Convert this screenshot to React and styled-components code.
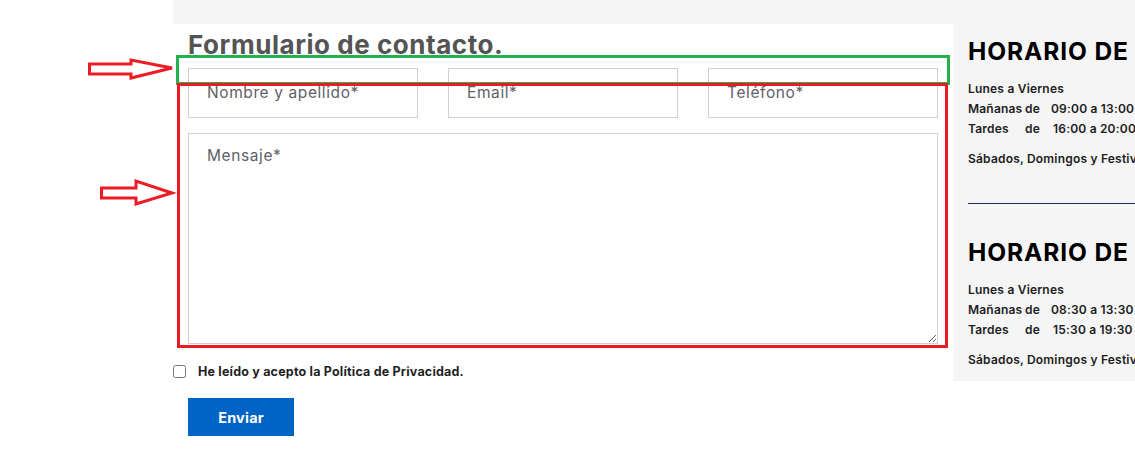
import React from "react";
import styled, { createGlobalStyle } from "styled-components";

const Global = createGlobalStyle`
  html, body { margin: 0; padding: 0; background: #fff; overflow: hidden; }
  body { font-family: "Inter", "Noto Sans", sans-serif; }
  * { box-sizing: border-box; }
`;

const Stage = styled.div`
  position: relative;
  width: 1135px;
  height: 453px;
  overflow: hidden;
  background: #fff;
`;

const Page = styled.div`
  padding-left: 173px;
  width: 1600px;
`;

const TopBand = styled.div`
  height: 24px;
  background: #f5f5f5;
`;

const Row = styled.div`
  display: flex;
  align-items: flex-start;
`;

const FormCol = styled.div`
  width: 780px;
  padding: 0 15px;
  background: #fff;
`;

const Title = styled.h2`
  margin: 0;
  height: 44px;
  line-height: 42px;
  font-size: 26px;
  font-weight: 700;
  color: #545454;
  letter-spacing: 0.55px;
`;

const Fields = styled.div`
  display: grid;
  grid-template-columns: repeat(3, 1fr);
  gap: 30px;
`;

const fieldBase = `
  display: block;
  width: 100%;
  border: 1px solid #d0d0d0;
  background: #fff;
  font-family: "Inter", "Noto Sans", sans-serif;
  font-size: 15.5px;
  letter-spacing: 0.6px;
  color: #333;
  outline: none;
  border-radius: 0;
  &::placeholder { color: #5f6169; opacity: 1; }
`;

const Input = styled.input`
  ${fieldBase}
  height: 50px;
  padding: 0 18px 2px;
`;

const TextArea = styled.textarea`
  ${fieldBase}
  margin-top: 15px;
  height: 211px;
  padding: 12px 18px;
  resize: vertical;
`;

const CheckRow = styled.label`
  display: flex;
  align-items: center;
  gap: 12px;
  margin: 20px 0 0 -15px;
  font-size: 12.5px;
  font-weight: 700;
  letter-spacing: 0.2px;
  color: #1f1f24;
`;

const Check = styled.input`
  margin: 0;
  width: 13px;
  height: 13px;
`;

const Button = styled.button`
  display: block;
  margin-top: 19px;
  width: 106px;
  height: 38px;
  border: 0;
  background: #0063c6;
  color: #fff;
  font-family: "Inter", "Noto Sans", sans-serif;
  font-size: 14.5px;
  font-weight: 700;
  letter-spacing: 0.2px;
`;

const Sidebar = styled.aside`
  width: 400px;
  background: #f5f5f5;
  padding: 0 15px 11px;
`;

const Block = styled.div`
  padding-top: ${(p) => p.$top}px;
`;

const Heading = styled.h3`
  margin: 0 0 13px;
  line-height: 30px;
  font-size: 24.5px;
  font-weight: 700;
  color: #000;
  letter-spacing: 0.9px;
`;

const Line = styled.div`
  line-height: 20px;
  font-size: 12px;
  font-weight: 600;
  letter-spacing: 0.2px;
  color: #1c1c22;
  white-space: nowrap;
  margin-top: ${(p) => p.$gap || 0}px;
`;

const Cell = styled.span`
  display: inline-block;
  width: ${(p) => p.$w}px;
`;

const Divider = styled.hr`
  margin: 34px 0 0;
  border: 0;
  border-top: 1px solid #1c2b5c;
`;

const Overlay = styled.div`
  position: absolute;
  left: ${(p) => p.$x}px;
  top: ${(p) => p.$y}px;
  width: ${(p) => p.$w}px;
  height: ${(p) => p.$h}px;
  border: 3px solid ${(p) => p.$c};
  pointer-events: none;
`;

const ArrowSvg = styled.svg`
  position: absolute;
  left: 0;
  top: 0;
  pointer-events: none;
`;

function Schedule({ top, morning, evening, deMorning, deEvening }) {
  return (
    <Block $top={top}>
      <Heading>HORARIO DE ATENCIÓN</Heading>
      <Line>Lunes a Viernes</Line>
      <Line>
        <Cell $w={57}>Mañanas</Cell>
        <Cell $w={deMorning}>de</Cell>
        {morning}
      </Line>
      <Line>
        <Cell $w={57}>Tardes</Cell>
        <Cell $w={deEvening}>de</Cell>
        {evening}
      </Line>
      <Line $gap={10}>Sábados, Domingos y Festivos: cerrado</Line>
    </Block>
  );
}

export default function App() {
  return (
    <Stage>
      <Global />
      <Page>
        <TopBand />
        <Row>
          <FormCol>
            <Title>Formulario de contacto.</Title>
            <Fields>
              <Input placeholder="Nombre y apellido*" />
              <Input placeholder="Email*" />
              <Input placeholder="Teléfono*" />
            </Fields>
            <TextArea placeholder="Mensaje*" />
            <CheckRow>
              <Check type="checkbox" />
              He leído y acepto la Política de Privacidad.
            </CheckRow>
            <Button type="button">Enviar</Button>
          </FormCol>
          <Sidebar>
            <Schedule
              top={12}
              morning="09:00 a 13:00"
              evening="16:00 a 20:00"
              deMorning={26}
              deEvening={28}
            />
            <Divider />
            <Schedule
              top={33}
              morning="08:30 a 13:30"
              evening="15:30 a 19:30"
              deMorning={26}
              deEvening={28}
            />
          </Sidebar>
        </Row>
      </Page>
      <Overlay $x={176} $y={55} $w={774} $h={30} $c="#22b14c" />
      <Overlay $x={177} $y={83} $w={771} $h={265} $c="#ed1c24" />
      <ArrowSvg width="200" height="220" viewBox="0 0 200 220">
        <polygon
          points="89.5,64 131,64 131,60 172,68 131,78 131,74 89.5,74"
          fill="#fff"
          stroke="#ed1c24"
          strokeWidth="3"
        />
        <polygon
          points="101.5,188 136,188 136,181 172,193 136,204 136,198 101.5,198"
          fill="#fff"
          stroke="#ed1c24"
          strokeWidth="3"
        />
      </ArrowSvg>
    </Stage>
  );
}
